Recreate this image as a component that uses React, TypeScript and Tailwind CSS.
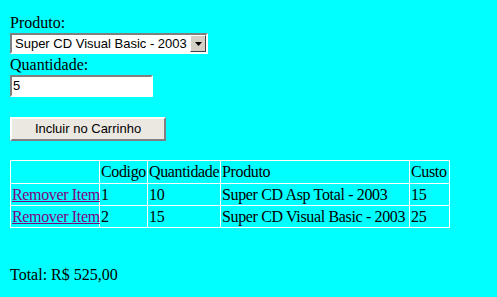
import React from "react";

const rows = [
  { codigo: "1", qtd: "10", produto: "Super CD Asp Total - 2003", custo: "15" },
  { codigo: "2", qtd: "15", produto: "Super CD Visual Basic - 2003", custo: "25" },
];

const serif = "font-['Liberation_Serif',serif]";
const sans = "font-['Liberation_Sans',Arial,sans-serif]";
const cell = "border border-white p-0 pl-px text-left font-normal whitespace-nowrap overflow-visible";

export default function App() {
  return (
    <div className={`min-h-[297px] w-[497px] bg-[#00ffff] px-[10px] pt-[14px] text-black ${serif} text-[16px] leading-[18px]`}>
      <div>Produto:</div>
      <div className="mt-px flex h-[21px] w-[198px] border-2 border-t-[#808080] border-l-[#808080] border-b-white border-r-white bg-white">
        <span className={`flex-1 pl-[3px] ${sans} text-[13px] leading-[17px] whitespace-nowrap`}>
          Super CD Visual Basic - 2003
        </span>
        <span className="flex h-[17px] w-[16px] items-center justify-center border border-t-white border-l-white border-b-[#404040] border-r-[#404040] bg-[#d4d0c8]">
          <svg width="7" height="4" viewBox="0 0 7 4">
            <path d="M0 0h7L3.5 4z" fill="black" />
          </svg>
        </span>
      </div>
      <div className="mt-[2px]">Quantidade:</div>
      <div className={`mt-px h-[22px] w-[143px] border-2 border-t-[#808080] border-l-[#808080] border-b-white border-r-white bg-white pl-[1px] ${sans} text-[13px] leading-[18px]`}>
        5
      </div>
      <button
        type="button"
        className={`mt-[20px] block h-[24px] w-[156px] border-2 border-t-white border-l-white border-b-[#808080] border-r-[#808080] bg-[#ebe7e1] ${sans} text-[13px] leading-[18px]`}
      >
        Incluir no Carrinho
      </button>
      <table className="mt-[19px] w-[439px] table-fixed border-collapse border border-t-white border-l-white border-b-[#a0a0a0] border-r-[#a0a0a0] tracking-[-0.35px]">
        <colgroup>
          <col className="w-[89px]" />
          <col className="w-[48px]" />
          <col className="w-[73px]" />
          <col className="w-[189px]" />
          <col className="w-[40px]" />
        </colgroup>
        <thead>
          <tr className="h-[23px]">
            <th className={cell}></th>
            <th className={cell}>Codigo</th>
            <th className={cell}>Quantidade</th>
            <th className={cell}>Produto</th>
            <th className={cell}>Custo</th>
          </tr>
        </thead>
        <tbody>
          {rows.map((r) => (
            <tr key={r.codigo} className="h-[22px]">
              <td className={cell}>
                <a href="#" className="text-[#800080] underline">Remover Item</a>
              </td>
              <td className={cell}>{r.codigo}</td>
              <td className={cell}>{r.qtd}</td>
              <td className={cell}>{r.produto}</td>
              <td className={cell}>{r.custo}</td>
            </tr>
          ))}
        </tbody>
      </table>
      <div className="mt-[38px]">Total: R$ 525,00</div>
    </div>
  );
}
